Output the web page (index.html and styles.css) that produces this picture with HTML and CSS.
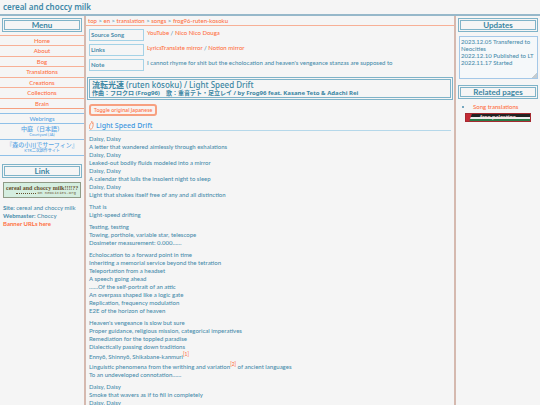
FILE: index.html
```
<!DOCTYPE html>
<html lang="en">
<head>
  <meta charset="UTF-8" />
  <meta name="viewport" content="width=device-width, initial-scale=1.0" />
  <title>Light Speed Drift - cereal and choccy milk</title>
  <link rel="stylesheet" href="styles.css">
</head>
<body>
  <header class="site-title">cereal and choccy milk</header>

  <div class="container">
    <!-- Left sidebar -->
    <aside class="sidebar">
      <h2 class="box">Menu</h2>
      <nav class="menu">
        <a href="#">Home</a>
        <a href="#">About</a>
        <a href="#">Bog</a>
        <a href="#">Translations</a>
        <a href="#">Creations</a>
        <a href="#">Collections</a>
        <a href="#">Brain</a>
      </nav>
      <nav class="menu webrings">
        <a href="#">Webrings</a>
        <a href="#" class="ja">中庭（日本語）<small>Courtyard (JA)</small></a>
        <a href="#" class="ja">『森の小川でサーフィン』<small>KTR二次創作サイト</small></a>
      </nav>

      <h2 class="box">Link</h2>
      <div class="banner">
        <b>cereal and choccy milk!!!!??</b>
        <span><i></i>on neocities.org</span>
      </div>
      <p class="info">
        <b>Site:</b> cereal and choccy milk<br>
        <b>Webmaster:</b> Choccy<br>
        <a href="#"><b>Banner URLs here</b></a>
      </p>
    </aside>

    <main>
      <nav class="crumbs">
        <a href="#">top</a> &gt; <a href="#">en</a> &gt; <a href="#">translation</a> &gt; <a href="#">songs</a> &gt; <a href="#">frog96-ruten-kosoku</a>
      </nav>

      <table class="meta">
        <tr><th>Source Song</th><td><a href="#">YouTube</a> / <a href="#">Nico Nico Douga</a></td></tr>
        <tr><th>Links</th><td><a href="#">LyricsTranslate mirror</a> / <a href="#">Notion mirror</a></td></tr>
        <tr><th>Note</th><td>I cannot rhyme for shit but the echolocation and heaven's vengeance stanzas are supposed to</td></tr>
      </table>

      <div class="song-title">
        <h1><b>流転光速</b> (ruten kōsoku) / Light Speed Drift</h1>
        <p>作曲：フロクロ (Frog96)　歌：重音テト・足立レイ / by Frog96 feat. Kasane Teto &amp; Adachi Rei</p>
      </div>

      <button class="toggle">Toggle original Japanese</button>

      <h2 class="song-heading">
        <svg viewBox="0 0 10 18"><path d="M4 1 C8 0 9 5 8 10 C7 15 4 18 2 16 C0 14 1 8 3 5 C5 2 7 3 7 6" /></svg>
        Light Speed Drift
      </h2>

      <div class="lyrics">
        <p>Daisy, Daisy<br>
        A letter that wandered aimlessly through exhalations<br>
        Daisy, Daisy<br>
        Leaked-out bodily fluids modeled into a mirror<br>
        Daisy, Daisy<br>
        A calendar that lulls the insolent night to sleep<br>
        Daisy, Daisy<br>
        Light that shakes itself free of any and all distinction</p>
        <p>That is<br>
        Light-speed drifting</p>
        <p>Testing, testing<br>
        Towing, porthole, variable star, telescope<br>
        Dosimeter measurement: 0.000……</p>
        <p>Echolocation to a forward point in time<br>
        Inheriting a memorial service beyond the tetration<br>
        Teleportation from a headset<br>
        A speech going ahead<br>
        ……Of the self-portrait of an attic<br>
        An overpass shaped like a logic gate<br>
        Replication, frequency modulation<br>
        E2E of the horizon of heaven</p>
        <p>Heaven's vengeance is slow but sure<br>
        Proper guidance, religious mission, categorical imperatives<br>
        Remediation for the toppled paradise<br>
        Dialectically passing down traditions<br>
        Ennyō, Shinnyō, Shikabane-kanmuri<sup><a href="#">[1]</a></sup><br>
        Linguistic phenomena from the writhing and variation<sup><a href="#">[2]</a></sup> of ancient languages<br>
        To an undeveloped connotation……</p>
        <p>Daisy, Daisy<br>
        Smoke that wavers as if to fill in completely<br>
        Daisy, Daisy</p>
      </div>
    </main>

    <!-- Right sidebar -->
    <aside class="sidebar right">
      <h2 class="box">Updates</h2>
      <textarea class="updates" aria-label="Updates" readonly>2023.12.05 Transferred to Neocities
2022.12.10 Published to LT
2022.11.17 Started</textarea>

      <h2 class="box">Related pages</h2>
      <ul class="related">
        <li><a href="#">Song translations</a></li>
      </ul>
      <a href="#" class="flag">free palestine</a>
    </aside>
  </div>
</body>
</html>
```
FILE: styles.css
```
* {
  box-sizing: border-box;
}
html {
  height: 100%;
  overflow: hidden;
}
body {
  margin: 0;
  height: 100%;
  display: flex;
  flex-direction: column;
  overflow: hidden;
  background: #f5f5f5;
  color: #4a8dac;
  font-family: Lato, "Noto Sans CJK JP", sans-serif;
  font-size: 6px;
  font-weight: 500;
  line-height: 8px;
}
h1, h2, p, ul {
  margin: 0;
}
a {
  color: #ff7043;
  text-decoration: none;
}
.site-title {
  flex: none;
  padding: 0 3px;
  border-bottom: 2px solid #96b8ca;
  color: #4088a8;
  font-family: "Noto Sans", sans-serif;
  font-size: 8px;
  font-weight: 600;
  line-height: 14px;
}
.container {
  flex: 1;
  min-height: 0;
  display: grid;
  grid-template-columns: 84px 1fr 84px;
}

/* sidebars */
.sidebar {
  padding-top: 2px;
}
.box {
  margin: 0 2px;
  border: 3px double #7fb3c8;
  color: #3b86a3;
  font-size: 8px;
  font-weight: 700;
  line-height: 8px;
  text-align: center;
}
.menu {
  margin-top: 3px;
  border-bottom: 1px solid #f5a080;
  text-align: center;
}
.menu a {
  display: block;
  padding: 1px 0;
  border-top: 1px solid #f7b096;
}
.menu a:not(.ja) {
  height: 10px;
}
.menu:not(.webrings) a:nth-child(even) {
  height: 11px;
}
.webrings {
  margin-top: 4px;
  border-color: #8fc0e8;
}
.webrings a {
  border-color: #8fc0e8;
  color: #5aa5e4;
}
.webrings a.ja {
  padding: 1px 0;
  line-height: 7px;
}
.ja small {
  display: block;
  font-size: 4px;
  line-height: 6px;
}
.webrings + .box {
  margin-top: 8px;
}
.banner {
  margin: 4px 3px 6px;
  padding: 2px 2px 0;
  height: 16px;
  border: 1px solid #8f9a86;
  background: #d5eee0;
  color: #66502e;
  text-align: center;
  white-space: nowrap;
}
.banner b {
  display: block;
  font-family: "Liberation Serif", serif;
  line-height: 6px;
}
.banner span {
  display: flex;
  align-items: center;
  justify-content: flex-end;
  gap: 2px;
  padding-right: 2px;
  font-family: "Liberation Mono", monospace;
  font-size: 4px;
  line-height: 5px;
}
.banner i {
  width: 20px;
  border-top: 1px dotted #66502e;
}
.info {
  padding-left: 3px;
}

/* main column */
main {
  min-width: 0;
  overflow: hidden;
  border-left: 2px solid #d5b9af;
  border-right: 2px solid #d5b9af;
}
.crumbs {
  padding: 0 2px;
  border-bottom: 1px solid #f7b096;
  line-height: 9px;
}
.meta {
  margin: 0 1px;
  border-spacing: 2px 3px;
  line-height: 8px;
}
.meta th {
  width: 55px;
  padding: 1px;
  border: 1px solid #a4d2e6;
  text-align: left;
  font-weight: 700;
}
.meta td {
  padding: 0 1px;
  vertical-align: top;
}
.song-title {
  margin: 3px 1px 4px;
  padding: 0 2px;
  border: 3px double #7fb3c8;
  color: #3b86a3;
  font-family: "Noto Sans", "Noto Sans CJK JP", sans-serif;
}
.song-title h1 {
  font-size: 8px;
  font-weight: 500;
  line-height: 9px;
}
.song-title p {
  font-weight: 700;
  line-height: 8px;
}
.toggle {
  display: block;
  margin: 0 3px;
  padding: 0 3px;
  border: 2px solid #f7a080;
  border-radius: 3px;
  background: #f8f3f1;
  color: #ff7043;
  font: 500 5px/8px "Noto Sans", sans-serif;
}
.song-heading {
  display: flex;
  align-items: center;
  gap: 2px;
  margin: 5px 3px 4px;
  border-bottom: 1px solid #b5d8ea;
  color: #3d98e0;
  font-family: "Noto Sans", sans-serif;
  font-size: 7px;
  font-weight: 500;
  line-height: 9px;
}
.song-heading svg {
  width: 5px;
  height: 9px;
  fill: none;
  stroke: #f59a76;
  stroke-width: 2;
}
.lyrics {
  padding-left: 3px;
}
.lyrics p {
  margin-bottom: 4px;
}
sup {
  font-size: 5px;
  line-height: 6px;
}

/* right column */
.updates {
  display: block;
  width: calc(100% - 5px);
  height: 43px;
  margin: 4px 2px 6px 3px;
  padding: 1px;
  border: 1px solid #a4c8e8;
  background: #f5f8fa;
  color: inherit;
  font: inherit;
  line-height: 7px;
}
.updates::-webkit-resizer {
  background: linear-gradient(135deg, transparent 50%, #c5ccd0 50%) right bottom / 5px 5px no-repeat;
}
.related {
  margin-top: 4px;
  padding-left: 17px;
}
.related li::marker {
  color: #4a8dac;
}
.flag {
  display: block;
  height: 9px;
  margin: 2px 9px 0;
  border: 1px solid #a52a30;
  background: linear-gradient(110deg, #c52a35 5px, transparent 6px), linear-gradient(#222 3px, #eee 3px 5px, #2a7a48 5px);
  color: #ffe5e5;
  line-height: 6px;
  text-align: center;
}
```
